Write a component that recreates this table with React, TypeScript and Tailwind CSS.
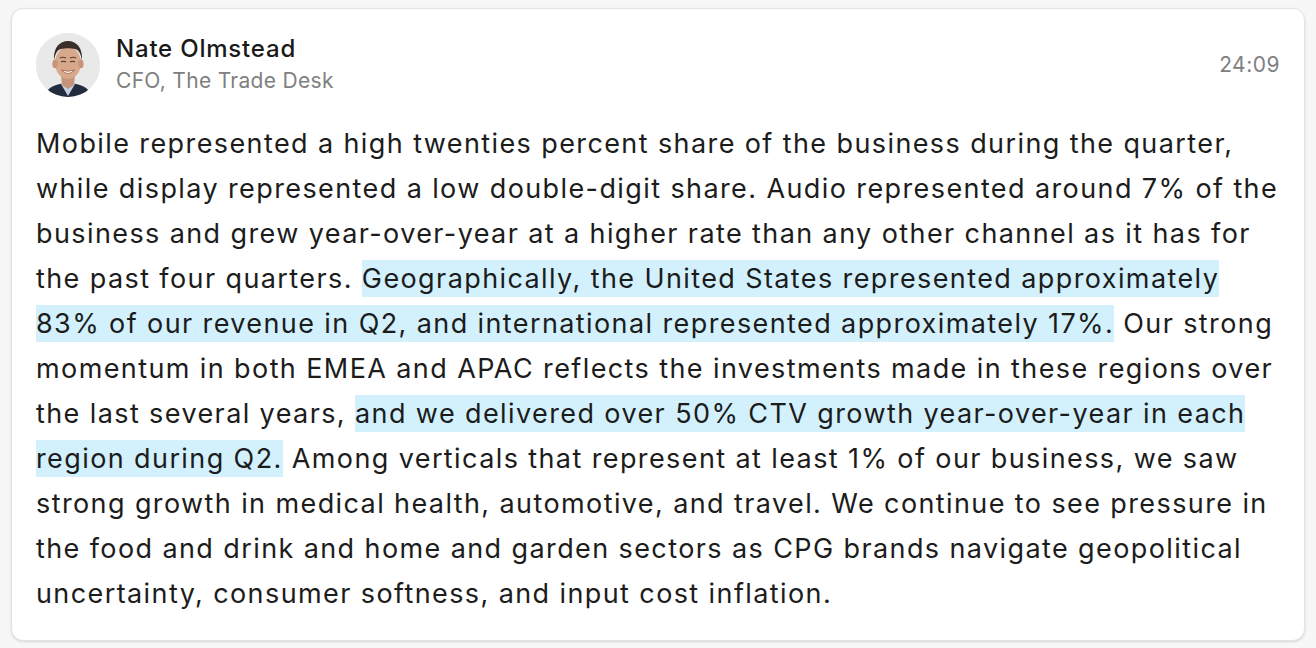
const Avatar = () => (
  <div className="h-16 w-16 shrink-0 overflow-hidden rounded-full bg-[#e9e9e9]">
    <svg viewBox="0 0 64 64" className="h-full w-full">
      <rect width="64" height="64" fill="#e9e9e9" />
      {/* suit and shirt */}
      <path d="M8 64 C10 55 18 51 32 50 C46 51 54 55 56 64 Z" fill="#222c3f" />
      <path d="M25 51 L32 63 L39 51 Z" fill="#c3d0e2" />
      {/* neck */}
      <path d="M25 42 L39 42 L38 52 L32 56 L26 52 Z" fill="#c4937a" />
      {/* face */}
      <ellipse cx="32" cy="30" rx="13" ry="16" fill="#d8a88b" />
      <ellipse cx="19" cy="31" rx="2.6" ry="4.2" fill="#c99377" />
      <ellipse cx="45" cy="31" rx="2.6" ry="4.2" fill="#c99377" />
      {/* hair */}
      <path d="M18 28 C17 14 24 8 32 8 C40 8 47 14 46 28 C45 21 43 17 39 16 C35 15 29 15 25 16 C21 17 19 21 18 28 Z" fill="#3a2f2a" />
      {/* brows, eyes, smile */}
      <path d="M24 25 Q27 23.5 30 25" stroke="#5a3f33" strokeWidth="1.1" fill="none" />
      <path d="M34 25 Q37 23.5 40 25" stroke="#5a3f33" strokeWidth="1.1" fill="none" />
      <path d="M25 29 Q27.5 27.5 30 29" stroke="#4a3228" strokeWidth="1.2" fill="none" />
      <path d="M34 29 Q36.5 27.5 39 29" stroke="#4a3228" strokeWidth="1.2" fill="none" />
      <path d="M25.5 37 Q32 44 38.5 37 Q32 39.5 25.5 37 Z" fill="#ffffff" stroke="#9b5f4b" strokeWidth="0.8" />
    </svg>
  </div>
);

const Mark = ({ children }: { children: React.ReactNode }) => (
  <span className="bg-[#d2f1fd] py-[2px]">{children}</span>
);

export default function App() {
  return (
    <div className="min-h-screen bg-[#f7f7f7] px-[11px] pt-2 pb-2 font-['Inter',sans-serif]">
      <div className="rounded-xl border border-[#e3e3e3] bg-white p-6 shadow-sm">
        <div className="flex items-center gap-4">
          <Avatar />
          <div className="flex-1">
            <p className="text-[24px] font-medium leading-8 tracking-[0.8px] text-[#1a1a1a]">Nate Olmstead</p>
            <p className="text-[21px] leading-8 tracking-[0.3px] text-[#808080]">CFO, The Trade Desk</p>
          </div>
          <span className="text-[21px] tracking-[0.5px] text-[#808080]">24:09</span>
        </div>
        <p className="mt-6 text-[27px] leading-[45px] tracking-[1.4px] text-[#1c1c1c]">
          Mobile represented a high twenties percent share of the business during the quarter, while display
          represented a low double-digit share. Audio represented around 7% of the business and grew
          year-over-year at a higher rate than any other channel as it has for the past four quarters.{" "}
          <Mark>
            Geographically, the United States represented approximately 83% of our revenue in Q2, and international
            represented approximately 17%.
          </Mark>{" "}
          Our strong momentum in both EMEA and APAC reflects the investments made in these regions over the last
          several years, <Mark>and we delivered over 50% CTV growth year-over-year in each region during Q2.</Mark>{" "}
          Among verticals that represent at least 1% of our business, we saw strong growth in medical health,
          automotive, and travel. We continue to see pressure in the food and drink and home and garden sectors as
          CPG brands navigate geopolitical uncertainty, consumer softness, and input cost inflation.
        </p>
      </div>
    </div>
  );
}
